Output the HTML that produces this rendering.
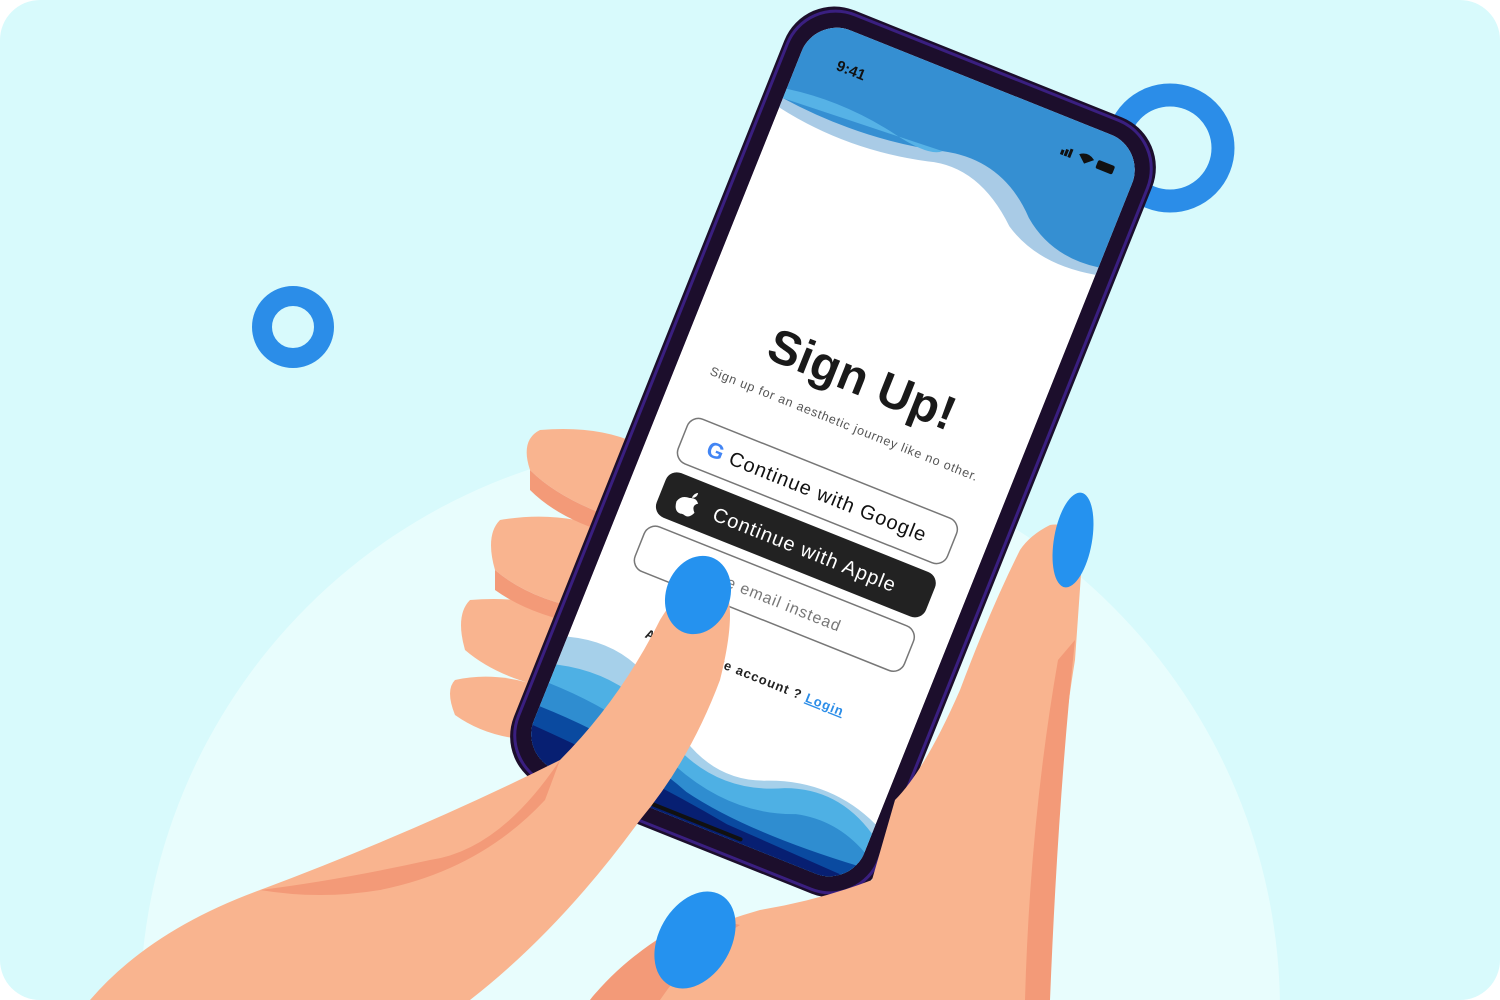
<!DOCTYPE html>
<html><head><meta charset="utf-8"><style>
html,body{margin:0;padding:0;background:#fff;overflow:hidden;width:1500px;height:1000px}
svg{display:block}
text{font-family:"Liberation Sans","DejaVu Sans",sans-serif}
</style></head><body>
<svg width="1500" height="1000" viewBox="0 0 1500 1000" xmlns="http://www.w3.org/2000/svg">
<defs>
<clipPath id="bg"><rect x="0" y="0" width="1500" height="1000" rx="40"/></clipPath>
<clipPath id="scr"><rect x="-178" y="-398" width="356" height="796" rx="38"/></clipPath>
</defs>
<g clip-path="url(#bg)">
<rect width="1500" height="1000" fill="#d8fafc"/>
<circle cx="710" cy="1010" r="570" fill="#e8fdfd"/>
<circle cx="293" cy="327" r="31" fill="none" stroke="#2b8de8" stroke-width="20"/>
<circle cx="1170" cy="148" r="53" fill="none" stroke="#2b8de8" stroke-width="23"/>

<!-- left hand fingers behind phone -->
<g fill="#f9b48f">
<path d="M540 430 Q600 425 640 445 L620 520 Q560 500 530 470 Q520 440 540 430Z"/>
<path d="M500 520 Q560 510 610 530 L590 610 Q530 600 495 570 Q485 535 500 520Z"/>
<path d="M470 600 Q530 595 580 615 L560 690 Q500 680 465 650 Q455 615 470 600Z"/>
<path d="M455 680 Q500 670 550 690 L540 740 Q490 740 455 715 Q445 690 455 680Z"/>
</g>
<g fill="#f39a78">
<path d="M530 470 Q560 500 620 520 L615 535 Q560 520 530 490Z"/>
<path d="M495 570 Q530 600 590 610 L585 625 Q530 615 495 590Z"/>
</g>

<!-- phone -->
<g transform="translate(833,452) rotate(21.8)">
<rect x="-198" y="-418" width="396" height="836" rx="54" fill="#1c0e2c"/>
<rect x="-194" y="-414" width="388" height="828" rx="52" fill="none" stroke="#3a1f80" stroke-width="3"/>
<g clip-path="url(#scr)">
<rect x="-178" y="-398" width="356" height="796" fill="#fff"/>
<path d="M-178 -398 H178 V-262 Q120 -250 80 -275 Q30 -320 -20 -305 Q-100 -285 -178 -300Z" fill="#a9cbe6"/>
<path d="M-178 -398 H178 V-270 Q130 -262 95 -290 Q50 -335 -10 -320 Q-90 -300 -178 -310Z" fill="#358fd2"/>
<path d="M-178 -320 Q-120 -330 -60 -318 Q-20 -310 -10 -320 L-178 -310Z" fill="#56b2e6"/>
<text x="-140" y="-356" font-size="15" font-weight="bold" fill="#111">9:41</text>
<rect x="100" y="-366" width="3" height="5" fill="#111"/><rect x="104" y="-368" width="3" height="7" fill="#111"/><rect x="108" y="-370" width="3" height="9" fill="#111"/>
<path d="M118 -368 Q126 -374 134 -368 L126 -361Z" fill="#111"/>
<rect x="138" y="-370" width="18" height="9" rx="2" fill="#111"/>
<text x="0" y="-62" font-size="48" font-weight="bold" text-anchor="middle" fill="#1a1a1a">Sign Up!</text>
<text x="0" y="-26" font-size="12.5" text-anchor="middle" fill="#555" letter-spacing="0.8">Sign up for an aesthetic journey like no other.</text>
<rect x="-145" y="18" width="290" height="48" rx="12" fill="#fff" stroke="#777" stroke-width="1.5"/>
<text x="-118" y="50" font-size="22" font-weight="bold" fill="#4285f4">G</text>
<text x="12" y="50" font-size="20" text-anchor="middle" fill="#111" letter-spacing="1">Continue with Google</text>
<rect x="-145" y="76" width="290" height="48" rx="12" fill="#222"/>
<path d="M-116 96 q6 -3 10 2 q-6 4 0 10 q-3 7 -8 6 q-3 -1 -5 0 q-7 0 -8 -10 q2 -8 11 -8Z M-110 88 q1 5 -4 7 q0 -5 4 -7Z" fill="#fff"/>
<text x="10" y="108" font-size="20" text-anchor="middle" fill="#fff" letter-spacing="1">Continue with Apple</text>
<rect x="-145" y="134" width="290" height="48" rx="12" fill="#fff" stroke="#777" stroke-width="1.5"/>
<text x="0" y="165" font-size="16" text-anchor="middle" fill="#777" letter-spacing="1">Use email instead</text>
<text x="0" y="242" font-size="13" font-weight="bold" text-anchor="middle" fill="#222" letter-spacing="1">Already have account ? <tspan fill="#2b8de8" text-decoration="underline">Login</tspan></text>
<path d="M-178 270 Q-110 250 -60 300 Q0 355 60 330 Q120 305 178 330 V398 H-178Z" fill="#a6d0ea"/>
<path d="M-178 300 Q-100 280 -40 330 Q20 360 80 330 Q130 310 178 340 V398 H-178Z" fill="#4eb0e4"/>
<path d="M-178 320 Q-90 320 -30 350 Q40 375 100 350 Q140 340 178 360 V398 H-178Z" fill="#2f8dd0"/>
<path d="M-178 345 Q-80 345 -10 370 Q60 385 178 375 V398 H-178Z" fill="#0a4aa0"/>
<path d="M-178 365 Q-60 370 40 385 L178 390 V398 H-178Z" fill="#071f72"/>
</g>
<rect x="-60" y="392" width="120" height="4" rx="2" fill="#111"/>
</g>

<!-- index finger -->
<path d="M90 1000 Q150 930 260 890 Q420 830 560 760 Q620 700 660 620 Q690 570 720 580 Q740 600 720 680 Q690 760 640 820 Q560 930 470 1000Z" fill="#f9b48f"/>
<path d="M260 890 Q340 880 430 860 Q500 850 560 760 L545 800 Q480 870 380 890 Q320 900 260 890Z" fill="#f39a78"/>
<ellipse cx="698" cy="595" rx="32" ry="40" transform="rotate(20 698 595)" fill="#2592ef"/>
<!-- right hand -->
<path d="M1082 560 Q1075 520 1050 525 Q1030 535 1020 550 Q990 610 960 690 Q925 770 895 800 L872 880 Q820 900 760 910 Q690 930 640 960 Q600 985 590 1000 L1048 1000 Q1052 800 1075 660 Z" fill="#f9b48f"/>
<path d="M1075 640 Q1058 800 1050 1000 L1025 1000 Q1030 820 1058 660Z" fill="#f39a78"/>
<path d="M590 1000 Q630 950 700 915 L740 925 Q690 955 660 1000Z" fill="#f39a78"/>
<ellipse cx="1073" cy="540" rx="19" ry="48" transform="rotate(10 1073 540)" fill="#2592ef"/>
<ellipse cx="695" cy="940" rx="36" ry="52" transform="rotate(30 695 940)" fill="#2592ef"/>
</g>
</svg>
</body></html>
